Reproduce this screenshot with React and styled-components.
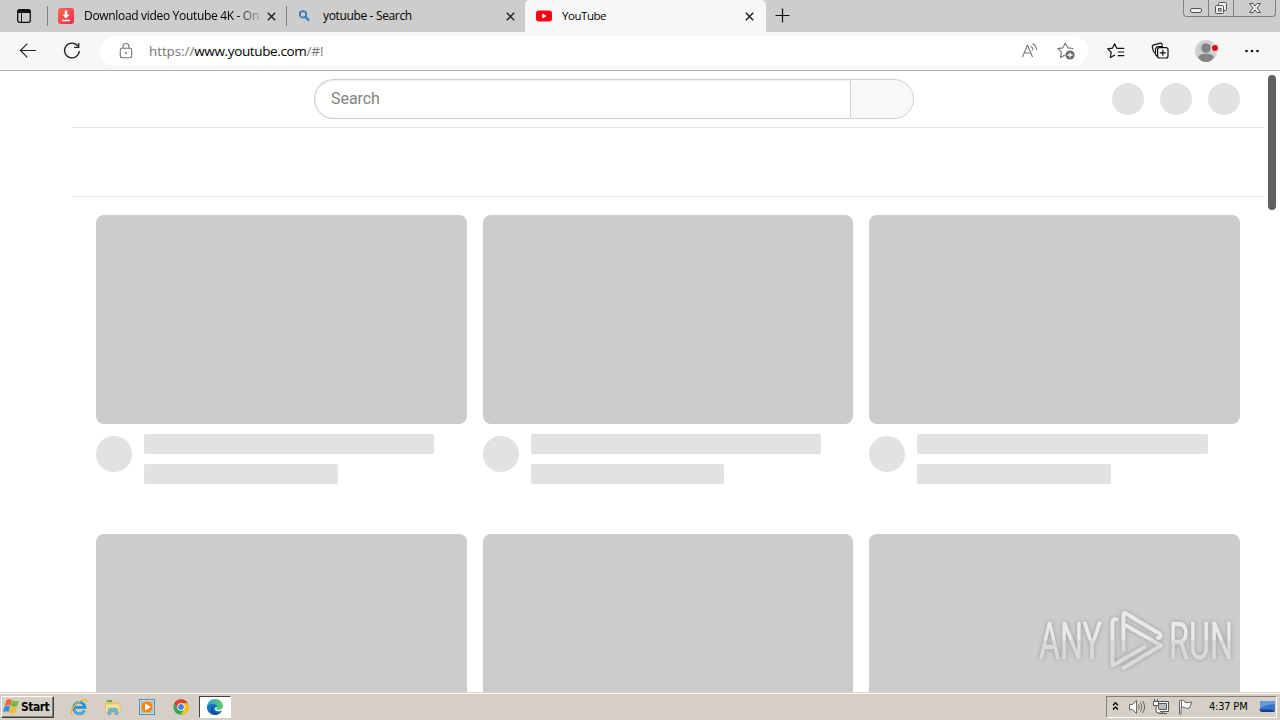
import React from 'react';
import styled, { createGlobalStyle } from 'styled-components';

const GlobalStyle = createGlobalStyle`
    * { box-sizing: border-box; }
    body {
        margin: 0;
        background: #fff;
        overflow: hidden;
        font-family: "Open Sans", "Noto Sans", sans-serif;
    }
    svg { display: block; flex: none; }
`;

const Screen = styled.div`
    width: 1280px;
    height: 720px;
    display: flex;
    flex-direction: column;
    overflow: hidden;
`;

/* ---- browser tabs ---- */
const TabStrip = styled.div`
    height: 32px;
    flex: none;
    display: flex;
    background: #cdcdcd;
`;

const TabMenu = styled.div`
    width: 47px;
    padding: 8px 0 0 16px;
`;

const Tab = styled.div`
    width: ${p => p.$width}px;
    height: 32px;
    display: flex;
    align-items: center;
    padding: 0 ${p => p.$active ? 11 : 10}px;
    background: ${p => p.$active ? '#f7f7f7' : 'transparent'};
    border-radius: ${p => p.$active ? '5px 5px 0 0' : '0'};
`;

const TabDivider = styled.div`
    width: 1px;
    height: 20px;
    margin-top: 6px;
    background: #808080;
`;

const TabTitle = styled.div`
    flex: 1;
    margin-left: ${p => p.$gap}px;
    white-space: nowrap;
    font-size: ${p => p.$size || 12}px;
    line-height: 18px;
    letter-spacing: ${p => p.$spacing}px;
    color: #000;
    mask-image: ${p => p.$fade ? 'linear-gradient(90deg, #000 152px, transparent 182px)' : 'none'};
`;

const NewTab = styled.div`
    flex: 1;
    padding: 8px 0 0 9px;
`;

const WindowControls = styled.div`
    display: flex;
    width: 93px;
    height: 17px;
    margin-right: 4px;
    border: 1px solid #808080;
    border-top: 0;
    border-radius: 0 0 4px 4px;
    overflow: hidden;
`;

const WindowButton = styled.div`
    width: ${p => p.$width}px;
    display: flex;
    justify-content: center;
    border-left: ${p => p.$first ? '0' : '1px solid #808080'};
`;

/* ---- toolbar ---- */
const Toolbar = styled.div`
    height: 39px;
    flex: none;
    display: flex;
    align-items: center;
    padding: 0 20px 0 18px;
    background: #f7f7f7;
    border-bottom: 1px solid #b4b4b4;
`;

const Nav = styled.div`
    display: flex;
    gap: 24px;
    width: 82px;
`;

const AddressBar = styled.div`
    width: 988px;
    height: 30px;
    display: flex;
    align-items: center;
    padding: 0 12px 0 16px;
    background: #fff;
    border-radius: 15px;
`;

const Url = styled.div`
    flex: 1;
    margin-left: 13px;
    font-size: 13.5px;
    line-height: 20px;
    letter-spacing: -0.1px;
    color: #767676;
    b {
        font-weight: 400;
        letter-spacing: -0.36px;
        color: #000;
    }
`;

const FieldIcons = styled.div`
    display: flex;
    gap: 16px;
`;

const Actions = styled.div`
    flex: 1;
    display: flex;
    align-items: center;
    justify-content: space-between;
    padding-left: 18px;
`;

/* ---- page ---- */
const Page = styled.div`
    height: 621px;
    flex: none;
    display: flex;
    background: #fff;
    overflow: hidden;
`;

const MiniGuide = styled.div`
    width: 72px;
`;

const Main = styled.div`
    width: 1192px;
`;

const Masthead = styled.header`
    height: 57px;
    display: flex;
    align-items: center;
    padding: 0 24px 0 242px;
    border-bottom: 1px solid #e2e2e2;
`;

const SearchBox = styled.div`
    display: flex;
    width: 600px;
    height: 40px;
`;

const SearchField = styled.div`
    width: 536px;
    padding-left: 16px;
    border: 1px solid #ccc;
    border-right: 0;
    border-radius: 20px 0 0 20px;
    box-shadow: inset 0 1px 2px #eee;
    font: 16px/37px Roboto, sans-serif;
    letter-spacing: -0.05px;
    color: #828282;
`;

const SearchButton = styled.div`
    flex: 1;
    background: #f8f8f8;
    border: 1px solid #d0d0d0;
    border-radius: 0 20px 20px 0;
`;

const HeaderIcons = styled.div`
    display: flex;
    gap: 16px;
    margin-left: auto;
`;

const Circle = styled.div`
    width: ${p => p.$size}px;
    height: ${p => p.$size}px;
    flex: none;
    border-radius: 50%;
    background: #e2e2e2;
`;

const Chips = styled.div`
    height: 69px;
    border-bottom: 1px solid #e2e2e2;
`;

const Grid = styled.div`
    display: grid;
    grid-template-columns: repeat(3, 1fr);
    gap: 50px 16px;
    padding: 18px 24px 0;
`;

const Card = styled.div`
    height: 269px;
`;

const Thumb = styled.div`
    height: 209px;
    background: #ccc;
    border-radius: 8px;
`;

const Details = styled.div`
    display: flex;
    gap: 12px;
    padding-top: 12px;
`;

const Lines = styled.div`
    flex: 1;
    margin-top: -2px;
`;

const Line = styled.div`
    width: ${p => p.$width}%;
    height: 20px;
    margin-bottom: 10px;
    background: #e2e2e2;
    border-radius: 2px;
`;

const ScrollTrack = styled.div`
    width: 16px;
    padding: 4px 4px 0;
`;

const ScrollThumb = styled.div`
    height: 135px;
    border-radius: 4px;
    background: #606060;
`;

const Watermark = styled.div`
    position: absolute;
    left: 1030px;
    top: 602px;
    filter: drop-shadow(0 0 2px rgba(90, 90, 90, .45));
`;

/* ---- taskbar ---- */
const Taskbar = styled.div`
    height: 28px;
    flex: none;
    display: flex;
    align-items: center;
    padding: 0 3px 0 1px;
    background: #d6cfc6;
    border-top: 1px solid #d6cfc6;
    box-shadow: inset 0 1px #fff;
`;

const StartButton = styled.div`
    width: 53px;
    height: 22px;
    display: flex;
    align-items: center;
    gap: 1px;
    padding-left: 1px;
    border: 1px solid;
    border-color: #fff #404040 #404040 #fff;
    box-shadow: inset -1px -1px #858079;
    font: bold 12px/20px "DejaVu Sans Condensed", "DejaVu Sans", sans-serif;
    letter-spacing: -0.5px;
    color: #000;
`;

const Launchers = styled.div`
    display: flex;
    gap: 16px;
    margin-left: 16px;
`;

const RunningApp = styled.div`
    width: 32px;
    height: 22px;
    display: flex;
    align-items: center;
    justify-content: center;
    margin-left: 9px;
    background: #fff;
    border: 1px solid;
    border-color: #404040 #fff #fff #404040;
`;

const Tray = styled.div`
    width: 171px;
    height: 22px;
    display: flex;
    align-items: center;
    margin-left: auto;
    padding-left: 4px;
    border: 1px solid;
    border-color: #858079 #fff #fff #858079;
`;

const TrayIcon = styled.svg`
    width: 18px;
    height: 18px;
    margin-left: ${p => p.$gap}px;
    fill: none;
`;

const Clock = styled.div`
    width: 50px;
    margin-left: 15px;
    font: 11px/18px "DejaVu Sans Condensed", "DejaVu Sans", sans-serif;
    letter-spacing: -0.2px;
    white-space: nowrap;
    color: #000;
`;

const Close = () => (
    <svg width="9" height="9" viewBox="0 0 9 9" stroke="#222" strokeWidth="1.5">
        <path d="M.8.8l7.4 7.4M8.2.8L.8 8.2" />
    </svg>
);

const DownloadIcon = () => (
    <svg width="16" height="16" viewBox="0 0 16 16">
        <defs>
            <linearGradient id="dl" x2="1" y2="1">
                <stop stopColor="#ff6a4d" /><stop offset="1" stopColor="#f22850" />
            </linearGradient>
        </defs>
        <rect width="16" height="16" rx="3" fill="url(#dl)" />
        <path d="M6.7 2.5h2.6v4.3h2.3L8 10.6 4.4 6.8h2.3zM4 11.8h8v1.4H4z" fill="#fff" />
    </svg>
);

const BingIcon = () => (
    <svg width="15" height="12" viewBox="-2 0 15 12" fill="none" stroke="#3b7cbb">
        <circle cx="4" cy="4.4" r="3.2" strokeWidth="1.8" />
        <path d="M6.4 6.9l3.7 3.7" strokeWidth="2.2" />
    </svg>
);

const YouTubeIcon = () => (
    <svg width="16" height="12" viewBox="0 0 16 12">
        <rect y=".4" width="16" height="11.2" rx="3" fill="#fc0018" />
        <path d="M6.3 3.5v5l4.4-2.5z" fill="#fff" />
    </svg>
);

const TabMenuIcon = () => (
    <svg width="16" height="16" viewBox="0 0 16 16">
        <rect x="1.7" y="1.7" width="12.6" height="12.6" rx="2" fill="none" stroke="#111" strokeWidth="1.3" />
        <path d="M1.5 5V3.5a2 2 0 0 1 2-2h9a2 2 0 0 1 2 2V5z" fill="#111" />
        <path d="M5.5 5v9" stroke="#111" />
    </svg>
);

const WindowButtons = () => (
    <WindowControls>
        <WindowButton $width={24} $first>
            <svg width="14" height="16" viewBox="0 0 14 16">
                <rect x="1.5" y="8.5" width="11" height="4" rx="1.5" fill="#eee" stroke="#555" />
            </svg>
        </WindowButton>
        <WindowButton $width={25}>
            <svg width="14" height="16" viewBox="0 0 14 16" fill="#eee" stroke="#555">
                <rect x="4.5" y="2.5" width="8" height="8" rx="1" />
                <rect x="1.5" y="5.5" width="8" height="8" rx="1" />
                <rect x="4.5" y="8.5" width="2.5" height="2.5" fill="#ccc" />
            </svg>
        </WindowButton>
        <WindowButton $width={42}>
            <svg width="14" height="16" viewBox="0 0 14 16">
                <path d="M1.5 3.5H5l2 2.6 2-2.6h3.5L9 8l3.5 4.5H9L7 9.9l-2 2.6H1.5L5 8z" fill="#eee" stroke="#555" />
            </svg>
        </WindowButton>
    </WindowControls>
);

const BackIcon = () => (
    <svg width="20" height="20" viewBox="0 0 20 20" fill="none" stroke="#222" strokeWidth="1.2">
        <path d="M18 9.5H2.5M9.3 2.7L2.5 9.5l6.8 6.8" />
    </svg>
);

const ReloadIcon = () => (
    <svg width="20" height="20" viewBox="0 0 20 20" fill="none" stroke="#222" strokeWidth="1.3">
        <path d="M15.8 5A7.4 7.4 0 1 0 17.3 10" /><path d="M16.7 2v4.3h-4.5" />
    </svg>
);

const LockIcon = () => (
    <svg width="20" height="20" viewBox="0 0 20 20" fill="none" stroke="#757575" strokeWidth="1.1">
        <rect x="4.3" y="7.2" width="11.4" height="9.6" rx="1.7" />
        <path d="M7 7.2V5.5a3 3 0 0 1 6 0v1.7" />
        <circle cx="10" cy="12" r="1" fill="#757575" stroke="none" />
    </svg>
);

const ReadAloudIcon = () => (
    <svg width="20" height="20" viewBox="0 0 20 20" fill="none" stroke="#777" strokeWidth="1.1">
        <path d="M2.5 16L7.2 4.5h.6L12.5 16M4.2 12h6.6" />
        <path d="M11 5.2q2 1.4 2.1 4.3M12.5 2.4q4 2.3 4.1 6.6" />
    </svg>
);

const AddFavoriteIcon = () => (
    <svg width="20" height="20" viewBox="0 0 20 20" fill="none" stroke="#777" strokeWidth="1.1">
        <path d="M16.4 8.2l.6-.7-5-.6L9.2 2.3 6.8 6.9l-5 .7 3.7 3.6-1 5.2 4.4-2.3" strokeLinejoin="round" />
        <circle cx="14" cy="14" r="4.6" fill="#696969" stroke="none" />
        <path d="M14 11.4v5.2M11.4 14h5.2" stroke="#fff" strokeWidth="1.3" />
    </svg>
);

const FavoritesIcon = () => (
    <svg width="20" height="20" viewBox="0 0 20 20" fill="none" stroke="#111" strokeWidth="1.2">
        <path d="M11.3 7.2h-.6L8.6 2.8 6.4 7.2l-4.7.7 3.5 3.4-.9 5.2 4.6-2.5" strokeLinejoin="round" />
        <path d="M11 7.4h7.2M11.7 11h6.5M11.7 14.6h6.5" />
    </svg>
);

const CollectionsIcon = () => (
    <svg width="20" height="20" viewBox="0 0 20 20" fill="none" stroke="#111" strokeWidth="1.2">
        <path d="M4.6 12.6Q2.6 11.4 2.2 9.6L1.4 6.2a2 2 0 0 1 1.4-2.4l6-1.5a2 2 0 0 1 2.4 1.4l.2.9" />
        <path d="M6.4 15.4q-1.9-.7-1.9-2.6V8.6q0-3 3-3h4.6" />
        <rect x="6.6" y="6.6" width="10.4" height="10.4" rx="2" fill="#f7f7f7" />
        <path d="M11.8 8.8v6M8.8 11.8h6" />
    </svg>
);

const ProfileIcon = () => (
    <svg width="24" height="24" viewBox="0 0 24 24">
        <circle cx="11" cy="12" r="11" fill="#d1d0ce" />
        <circle cx="11" cy="9" r="4.8" fill="#858585" />
        <path d="M3.3 18.7c0-3 3.5-4 7.7-4s7.7 1 7.7 4c-1.8 2.7-4.5 4.3-7.7 4.3s-5.9-1.6-7.7-4.3z" fill="#858585" />
        <circle cx="20" cy="9" r="3.5" fill="#f7f7f7" />
        <circle cx="20" cy="9" r="3" fill="#e00016" />
    </svg>
);

const MoreIcon = () => (
    <svg width="16" height="16" viewBox="0 0 16 16" fill="#111">
        <circle cx="2.5" cy="8" r="1.3" /><circle cx="8" cy="8" r="1.3" /><circle cx="13.5" cy="8" r="1.3" />
    </svg>
);

const WindowsFlag = () => (
    <svg width="17" height="17" viewBox="0 0 17 17">
        <path d="M3.4 2.2Q6 .3 8.8 1.9L7.3 7.7Q4.6 6.2 1.8 7.9z" fill="#ed6430" />
        <path d="M9.3 2.2q3 1.9 6.6.3l-1.7 5.8Q10.9 9.7 7.8 8z" fill="#75b843" />
        <path d="M1.6 8.5Q4.4 6.9 7.1 8.3L5.6 14Q2.9 12.5.1 14.2z" fill="#398ed5" />
        <path d="M7.6 8.6q3.2 1.7 6.4.3l-1.7 5.7q-3.1 1.5-6.2-.3z" fill="#f3bd30" />
    </svg>
);

const ExplorerE = () => (
    <svg width="18" height="18" viewBox="0 0 18 18" fill="none">
        <path d="M14.5 12.4a5.7 5.7 0 1 1 .5-3.1H4.5" stroke="#2793d5" strokeWidth="2.7" />
        <path d="M14.6 12.5a5.8 5.8 0 0 1-10.4-.4" stroke="#65c8f1" strokeWidth="1" />
        <path d="M2.2 16.7C-1 14.8 4 6.4 10.8 2.8c4-2.1 6.8-1.8 5.5 1.5" stroke="#e8b633" strokeWidth="1.3" />
    </svg>
);

const FolderIcon = () => (
    <svg width="18" height="18" viewBox="0 0 18 18">
        <path d="M1.5 3h5l1.2 1.6H15V14H1.5z" fill="#e8c461" />
        <path d="M3 2h5v2H3z" fill="#54ac68" />
        <path d="M1.5 6H16v8.7H1.5z" fill="#f7e297" stroke="#d1b15b" strokeWidth=".5" />
        <path d="M4.2 16.5v-3.8q0-2.5 2.3-2.5h5q2.3 0 2.3 2.5v3.8h-2.6v-3H6.8v3z" fill="#72b8dc" stroke="#448bb5" strokeWidth=".5" />
    </svg>
);

const PlayerIcon = () => (
    <svg width="18" height="18" viewBox="0 0 18 18">
        <rect x="1.5" y="1.5" width="15" height="15" fill="#c4dff2" stroke="#528db8" />
        <path d="M3 3h12v12H3z" fill="#8bbddd" />
        <circle cx="9" cy="9" r="6" fill="#f08218" stroke="#fbbf66" />
        <path d="M7 5.3v7.4L12.7 9z" fill="#fff" />
    </svg>
);

const ChromeIcon = () => (
    <svg width="18" height="18" viewBox="0 0 18 18">
        <circle cx="9" cy="9" r="7.7" fill="#35a853" />
        <path d="M2.3 5.2A7.7 7.7 0 0 1 15.7 5.2H9L6 11z" fill="#e64034" />
        <path d="M15.7 5.2A7.7 7.7 0 0 1 8.7 16.7L12.3 10.8 9 5.2z" fill="#fbc116" />
        <circle cx="9" cy="9" r="3.8" fill="#fff" /><circle cx="9" cy="9" r="2.9" fill="#4285e8" />
    </svg>
);

const EdgeIcon = () => (
    <svg width="18" height="18" viewBox="0 0 18 18">
        <defs>
            <linearGradient id="edge" x2="1"><stop stopColor="#259edb" /><stop offset="1" stopColor="#65cf5a" /></linearGradient>
        </defs>
        <path d="M1 9.5C1 6 4.5 5 7 5c3 0 4.5 2 4.5 4-2 0-3 1-2.600 2.200.8 2.100 4.200 2.600 7.300 1.400C14.500 15.600 12 17 9 17c-4.500 0-8-3.400-8-7.500z" fill="#1671be" />
        <path d="M1 9C1.200 3.800 4.900 1 9 1c5 0 8 3.600 8 7 0 2.700-2 4-4.300 4-2 0-2.900-.9-2.100-1.700C12 8.600 10.200 6.100 7 6.100 4 6.100 1.600 7.400 1 9z" fill="url(#edge)" />
        <path d="M7 8.600c-2 4.200 2.500 7.200 7.800 5.600C13.200 16 11.300 17 9 17 4.600 16.500 3.600 11 7 8.600z" fill="#124d91" />
    </svg>
);

const TrayIcons = () => (
    <>
        <svg width="9" height="14" viewBox="0 0 9 14" fill="none" stroke="#000" strokeWidth="1.4">
            <path d="M2 5.300l2.500-2.500L7 5.300M2 9.500L4.500 7 7 9.500" />
        </svg>
        <TrayIcon $gap={8} viewBox="0 0 18 18" stroke="#666">
            <path d="M1.500 6.500h3l4-4v13l-4-4h-3z" fill="#fff" />
            <path d="M10.500 6.500q1.500 2.500 0 5M12.500 4.500q3 4.500 0 9M14.600 3q4 6 0 12" />
        </TrayIcon>
        <TrayIcon $gap={6} viewBox="0 0 18 18" stroke="#555">
            <path d="M5.500 4.500h10v8h-10z" fill="#aaa" stroke="#fff" strokeWidth="3" />
            <path d="M4.500 3.500h12v10h-12z" />
            <path d="M6.500 5.500h8v6h-8z" fill="#bbb" />
            <path d="M10.500 13v2.500M7 15.500h8" />
            <path d="M1.500 3.500h5v4h-5zM2.500 1v2M5.500 1v2M4 7.500V13q0 2 2 2h3" fill="#fff" />
        </TrayIcon>
        <TrayIcon $gap={6} viewBox="0 0 18 18" stroke="#666">
            <path d="M3.500 2.500q3-1 5 .5 0 1.500 1.500 1.500 2 .5 6-.5-1.500 3-2.500 6-3 1-5-.5-2-1-3.500 0V16H3.500z" fill="#fff" />
            <path d="M5.500 3v7" />
        </TrayIcon>
    </>
);

const MonitorIcon = () => (
    <svg width="17" height="14" viewBox="0 0 17 14">
        <path d="M1 1h15v10H1z" fill="#3974c7" />
        <path d="M1 1h15v3Q9 4 1 8z" fill="#669adb" />
        <path d="M0 9.500h13l3 2.500H2z" fill="#173f83" />
    </svg>
);

const Logo = () => (
    <Watermark>
        <svg width="250" height="76" viewBox="0 0 250 76" overflow="visible">
            <defs>
                <linearGradient id="shine" x1="0" y1="0" x2="0" y2="76" gradientUnits="userSpaceOnUse">
                    <stop offset=".49" stopColor="#e9e9e9" /><stop offset=".51" stopColor="#dadada" />
                </linearGradient>
            </defs>
            <g fill="url(#shine)" stroke="url(#shine)" strokeWidth=".6" fontFamily="Roboto" fontSize="52">
                <text x="9" y="57" textLength="63" lengthAdjust="spacingAndGlyphs">ANY</text>
                <text x="139" y="57" textLength="64" lengthAdjust="spacingAndGlyphs">RUN</text>
            </g>
            <g fill="none" stroke="url(#shine)" strokeWidth="4" strokeLinecap="round" strokeLinejoin="round">
                <path d="M86.500 17.500q-4-1-4 2.500v43.500l32-18.500" />
                <path d="M93.500 48V13q0-3 2.500-1.500L130 32q2 3-2 4" />
                <path d="M96 23.500l35 20L93.500 66" />
            </g>
        </svg>
    </Watermark>
);

const VideoCard = () => (
    <Card>
        <Thumb />
        <Details>
            <Circle $size={36} />
            <Lines>
                <Line $width={90} />
                <Line $width={60} />
            </Lines>
        </Details>
    </Card>
);

export default function App() {
    return (
        <Screen>
            <GlobalStyle />
            <TabStrip>
                <TabMenu><TabMenuIcon /></TabMenu>
                <TabDivider />
                <Tab $width={238}>
                    <DownloadIcon />
                    <TabTitle $gap={10} $spacing={-0.32} $fade>Download video Youtube 4K - On</TabTitle>
                    <Close />
                </Tab>
                <TabDivider />
                <Tab $width={238}>
                    <BingIcon />
                    <TabTitle $gap={11} $spacing={-0.35}>yotuube - Search</TabTitle>
                    <Close />
                </Tab>
                <Tab $width={241} $active>
                    <YouTubeIcon />
                    <TabTitle $gap={10} $size={11.5} $spacing={-0.45}>YouTube</TabTitle>
                    <svg width="3" height="9" />
                    <Close />
                    <svg width="1" height="9" />
                </Tab>
                <NewTab>
                    <svg width="15" height="15" viewBox="0 0 15 15" stroke="#111" strokeWidth="1.2">
                        <path d="M7.500.5v14M.5 7.500h14" />
                    </svg>
                </NewTab>
                <WindowButtons />
            </TabStrip>
            <Toolbar>
                <Nav><BackIcon /><ReloadIcon /></Nav>
                <AddressBar>
                    <LockIcon />
                    <Url>https://<b>www.youtube.com</b>/#!</Url>
                    <FieldIcons><ReadAloudIcon /><AddFavoriteIcon /></FieldIcons>
                </AddressBar>
                <Actions>
                    <FavoritesIcon />
                    <CollectionsIcon />
                    <ProfileIcon />
                    <MoreIcon />
                </Actions>
            </Toolbar>
            <Page>
                <MiniGuide />
                <Main>
                    <Masthead>
                        <SearchBox>
                            <SearchField>Search</SearchField>
                            <SearchButton />
                        </SearchBox>
                        <HeaderIcons>
                            <Circle $size={32} /><Circle $size={32} /><Circle $size={32} />
                        </HeaderIcons>
                    </Masthead>
                    <Chips />
                    <Grid>
                        {[1, 2, 3, 4, 5, 6].map(n => <VideoCard key={n} />)}
                    </Grid>
                </Main>
                <ScrollTrack><ScrollThumb /></ScrollTrack>
            </Page>
            <Taskbar>
                <StartButton><WindowsFlag />Start</StartButton>
                <Launchers>
                    <ExplorerE /><FolderIcon /><PlayerIcon /><ChromeIcon />
                </Launchers>
                <RunningApp><EdgeIcon /></RunningApp>
                <Tray>
                    <TrayIcons />
                    <Clock>4:37 PM</Clock>
                    <MonitorIcon />
                </Tray>
            </Taskbar>
            <Logo />
        </Screen>
    );
}
